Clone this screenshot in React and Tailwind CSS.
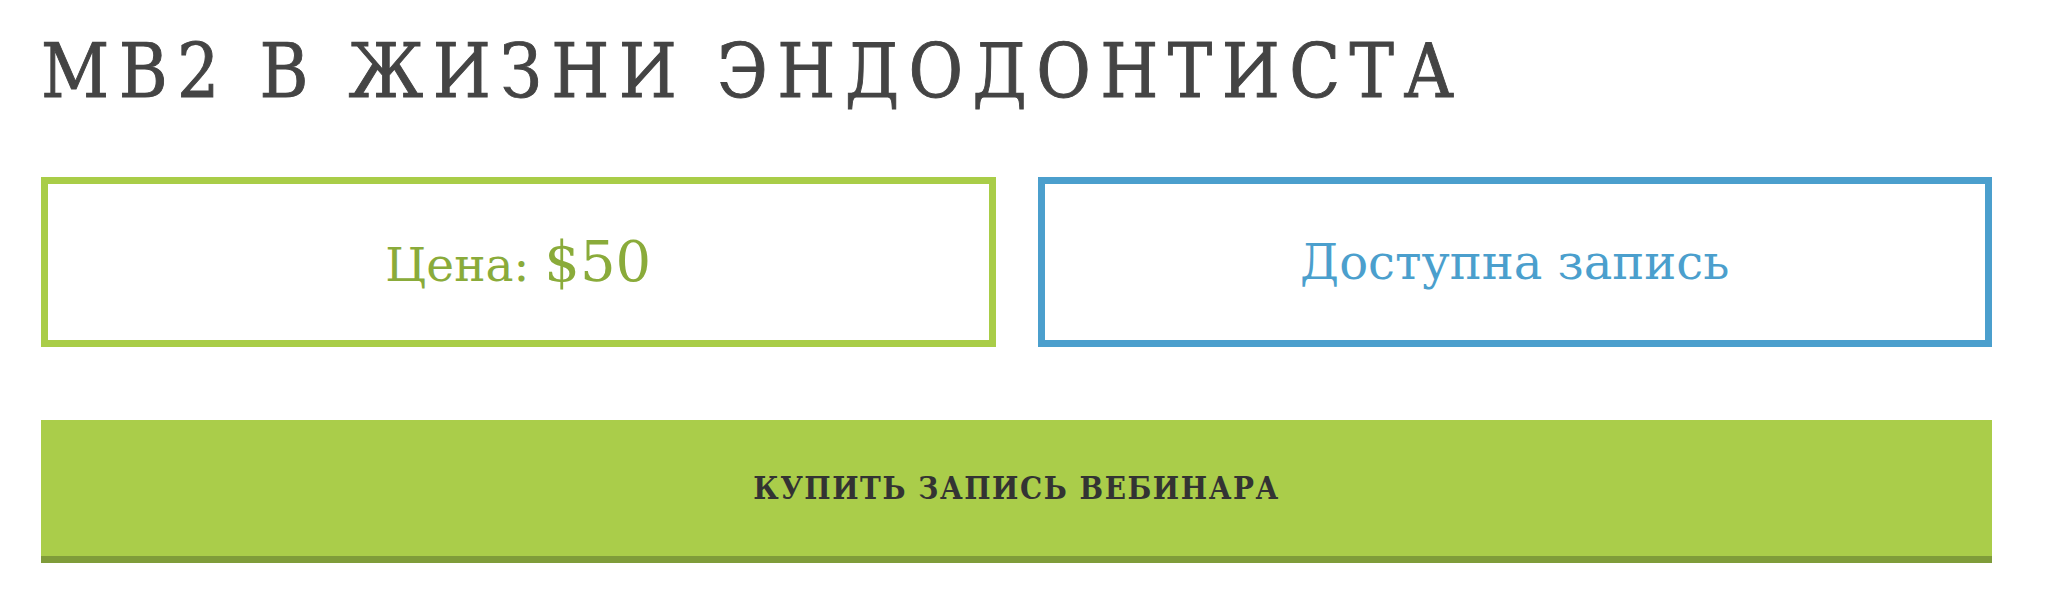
import React from 'react'

// Webinar purchase card: title, price / availability tiles and the buy button
export default function App() {
    return (
        <div className="min-h-[600px] bg-white px-[41px] pt-[28px]" style={{ fontFamily: '"DejaVu Serif", "Liberation Serif", serif' }}>
            <h1 className="text-[74px] leading-[86px] tracking-[0.128em] text-[#444444] font-normal font-stretch-condensed uppercase [-webkit-text-stroke:0.9px_#444444]">
                MB2 в жизни эндодонтиста
            </h1>

            <div className="mt-[63px] grid w-[1951px] grid-cols-2 gap-[42px]">
                <div className="flex h-[170px] items-center justify-center border-[7px] border-[#a9cd48]">
                    <span className="text-[47px] text-[#8aab3a]">
                        Цена: <span className="text-[56px]">$50</span>
                    </span>
                </div>
                <div className="flex h-[170px] items-center justify-center border-[7px] border-[#4b9fcd]">
                    <span className="text-[48px] text-[#4b9fcd]">Доступна запись</span>
                </div>
            </div>

            <button className="mt-[73px] flex h-[143px] w-[1951px] items-center justify-center border-b-[7px] border-[#7f9c3a] bg-[#aacd4a] text-[31px] font-bold uppercase tracking-[0.05em] text-[#333333] font-stretch-condensed">
                Купить запись вебинара
            </button>
        </div>
    )
}
